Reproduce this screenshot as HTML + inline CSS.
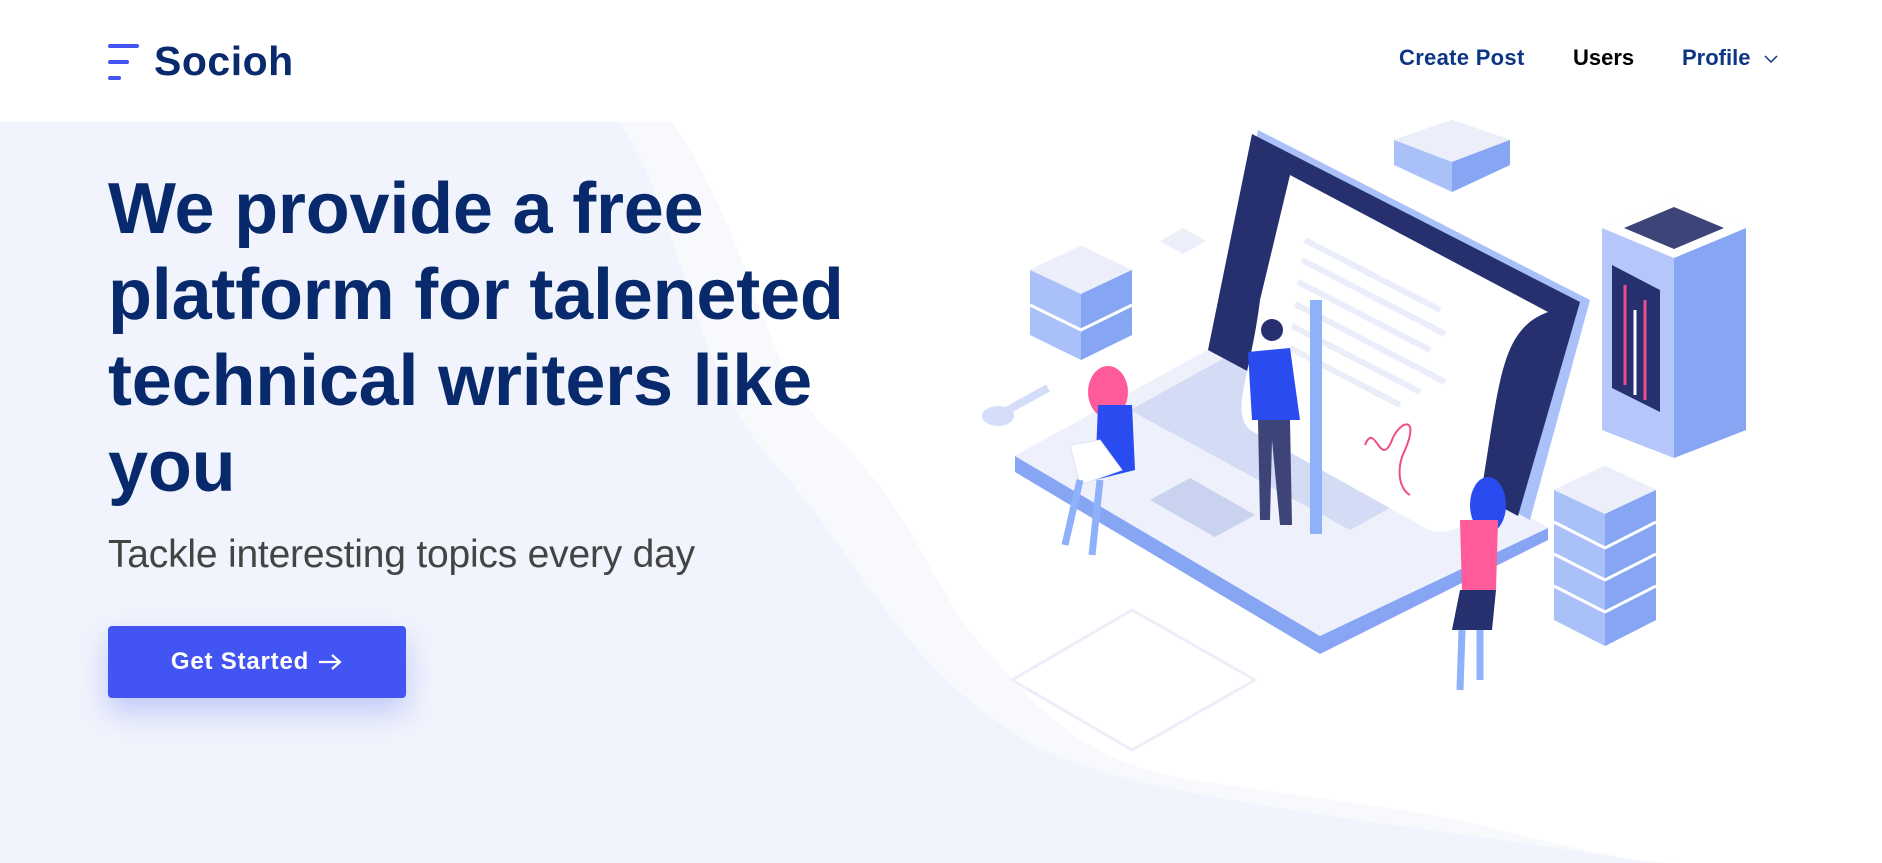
<!DOCTYPE html>
<html><head><meta charset="utf-8"><style>
*{margin:0;padding:0;box-sizing:border-box}
html,body{width:1882px;height:863px;overflow:hidden;background:#fff;font-family:"Liberation Sans",sans-serif}
.hero-bg{position:absolute;left:0;top:122px;width:1882px;height:741px}
.logo{position:absolute;left:108px;top:38px;display:flex;align-items:center}
.logo .t{font-size:41px;font-weight:700;color:#0a2a6e;margin-left:14px;letter-spacing:0.5px}
.nav{position:absolute;top:45px;font-size:22px;font-weight:700;color:#0c3584}
h1{position:absolute;left:108px;top:166px;font-size:72px;line-height:86px;font-weight:700;color:#082a6c;width:800px;letter-spacing:-0.2px}
.sub{position:absolute;left:108px;top:533px;font-size:39px;color:#444;letter-spacing:-0.2px}
.btn{position:absolute;left:108px;top:626px;width:298px;height:72px;background:#4255f2;border-radius:4px;color:#fff;font-size:24px;font-weight:700;display:flex;align-items:center;justify-content:center;box-shadow:0 14px 30px rgba(66,85,242,0.28);letter-spacing:0.8px}
</style></head><body>
<svg class="hero-bg" width="1882" height="741" viewBox="0 122 1882 741">
<rect x="0" y="122" width="1882" height="741" fill="#f1f4fc"/>
<path d="M618,122 C680,200 690,380 780,470 C860,560 900,660 1010,730 C1100,800 1400,820 1650,863 L1882,863 L1882,122 Z" fill="#f8f9fd"/>
<path d="M672,122 C760,250 760,380 840,440 C920,520 940,610 996,660 C1060,740 1120,770 1200,781 C1320,800 1430,810 1500,830 C1580,850 1640,863 1680,863 L1882,863 L1882,122 Z" fill="#fff"/>
</svg>
<div class="logo">
<svg width="32" height="40" viewBox="0 0 32 40"><rect x="0" y="2" width="31" height="4" rx="2" fill="#4255f2"/><rect x="0" y="18" width="21" height="4" rx="2" fill="#4255f2"/><rect x="0" y="34" width="13" height="4" rx="2" fill="#4255f2"/></svg>
<span class="t">Socioh</span>
</div>
<div class="nav" style="left:1399px;letter-spacing:0.3px">Create Post</div>
<div class="nav" style="left:1573px;color:#000">Users</div>
<div class="nav" style="left:1682px">Profile <svg width="16" height="10" viewBox="0 0 16 10" style="margin-left:6px;vertical-align:middle"><path d="M2 2 L8 8 L14 2" fill="none" stroke="#0c3584" stroke-width="1.5"/></svg></div>
<h1>We provide a free platform for taleneted technical writers like you</h1>
<div class="sub">Tackle interesting topics every day</div>
<div class="btn">Get Started <svg width="26" height="18" viewBox="0 0 26 18" style="margin-left:8px"><path d="M2 9 H23 M15 2 L23 9 L15 16" fill="none" stroke="#fff" stroke-width="2.2"/></svg></div>

<svg style="position:absolute;left:0;top:0" width="1882" height="863" viewBox="0 0 1882 863">
<path d="M1012,680 L1132,610 L1255,680 L1132,750 Z" fill="none" stroke="#eceefa" stroke-width="3" stroke-linejoin="round"/>
<path d="M1160,241 L1183,228 L1206,241 L1183,254 Z" fill="#eceefa"/>
<path d="M1015,456 L1212,348 L1548,528 L1320,650 Z" fill="#a9c0f8"/>
<path d="M1015,456 L1015,472 L1320,654 L1548,540 L1548,528 L1320,636 Z" fill="#86a5f3"/>
<path d="M1015,456 L1212,348 L1548,528 L1320,636 Z" fill="#eef0fb"/>
<path d="M1130,410 L1230,355 L1450,475 L1350,530 Z" fill="#cdd6f2" opacity="0.8"/>
<path d="M1150,500 L1190,478 L1255,515 L1215,537 Z" fill="#c9d3f0"/>
<path d="M1258,130 L1590,300 L1530,520 L1212,348 Z" fill="#a9c0f8"/>
<path d="M1252,134 L1580,302 L1518,516 L1208,350 Z" fill="#26306f"/>
<path d="M1290,175 L1548,312 C1500,330 1500,380 1480,500 C1470,530 1440,540 1420,525 L1250,430 C1230,410 1250,380 1260,300 Z" fill="#fff"/>
<g stroke="#eaedfa" stroke-width="6">
<path d="M1305,240 L1440,310"/><path d="M1302,260 L1445,334"/><path d="M1298,282 L1430,350"/><path d="M1295,304 L1445,382"/><path d="M1292,326 L1420,392"/><path d="M1290,348 L1400,405"/>
</g>
<path d="M1365,445 C1375,420 1380,470 1392,440 C1400,420 1420,415 1405,450 C1395,470 1400,490 1410,495" fill="none" stroke="#ee4d8a" stroke-width="2"/>
<path d="M1602,228 L1674,198 L1746,228 L1746,430 L1674,458 L1602,430 Z" fill="#b4c6fa"/>
<path d="M1674,258 L1746,228 L1746,430 L1674,458 Z" fill="#86a5f3"/>
<path d="M1602,228 L1674,198 L1746,228 L1674,258 Z" fill="#fff"/>
<path d="M1624,228 L1674,207 L1724,228 L1674,249 Z" fill="#3d4478"/>
<path d="M1612,265 L1660,290 L1660,412 L1612,388 Z" fill="#26306f"/>
<path d="M1625,285 L1625,385 M1645,300 L1645,400" stroke="#ee4d8a" stroke-width="3"/>
<path d="M1635,310 L1635,395" stroke="#fff" stroke-width="3"/>
<path d="M1394,140 L1452,120 L1510,140 L1510,165 L1452,192 L1394,165 Z" fill="#a9c0f8"/>
<path d="M1394,140 L1452,120 L1510,140 L1452,162 Z" fill="#eceefa"/>
<path d="M1452,162 L1510,140 L1510,165 L1452,192 Z" fill="#86a5f3"/>
<path d="M1030,270 L1081,246 L1132,270 L1132,335 L1081,360 L1030,335 Z" fill="#a9c0f8"/>
<path d="M1030,270 L1081,246 L1132,270 L1081,294 Z" fill="#eceefa"/>
<path d="M1081,294 L1132,270 L1132,335 L1081,360 Z" fill="#86a5f3"/>
<path d="M1030,305 L1081,330 L1132,305" stroke="#fff" stroke-width="3" fill="none"/>
<path d="M1554,490 L1605,466 L1656,490 L1656,620 L1605,646 L1554,620 Z" fill="#a9c0f8"/>
<path d="M1554,490 L1605,466 L1656,490 L1605,514 Z" fill="#eceefa"/>
<path d="M1605,514 L1656,490 L1656,620 L1605,646 Z" fill="#86a5f3"/>
<path d="M1554,522 L1605,548 L1656,522 M1554,554 L1605,580 L1656,554 M1554,586 L1605,612 L1656,586" stroke="#fff" stroke-width="3" fill="none"/>
<ellipse cx="998" cy="416" rx="16" ry="10" fill="#d5def8"/>
<path d="M1008,410 L1048,388" stroke="#d5def8" stroke-width="8"/>
<circle cx="1272" cy="330" r="11" fill="#26306f"/>
<path d="M1248,352 L1290,348 L1300,420 L1252,420 Z" fill="#2a4bf0"/>
<path d="M1258,420 L1260,520 L1270,520 L1272,440 L1280,525 L1292,525 L1290,420 Z" fill="#3d4478"/>
<path d="M1310,300 L1322,300 L1322,534 L1310,534 Z" fill="#8fb1fa"/>
<ellipse cx="1108" cy="392" rx="20" ry="26" fill="#ff5b9b"/>
<path d="M1098,405 L1132,405 L1135,470 L1095,480 Z" fill="#2a4bf0"/>
<path d="M1070,445 L1100,440 L1122,470 L1080,485 Z" fill="#fff" stroke="#dde3f8"/>
<path d="M1080,480 L1065,545 M1100,480 L1092,555" stroke="#8fb1fa" stroke-width="7"/>
<ellipse cx="1488" cy="505" rx="18" ry="28" fill="#2a4bf0"/>
<path d="M1460,520 L1498,520 L1496,590 L1462,590 Z" fill="#ff5b9b"/>
<path d="M1460,590 L1496,590 L1492,630 L1452,630 Z" fill="#26306f"/>
<path d="M1462,630 L1460,690 M1480,630 L1480,680" stroke="#8fb1fa" stroke-width="7"/>
</svg>
</body></html>
